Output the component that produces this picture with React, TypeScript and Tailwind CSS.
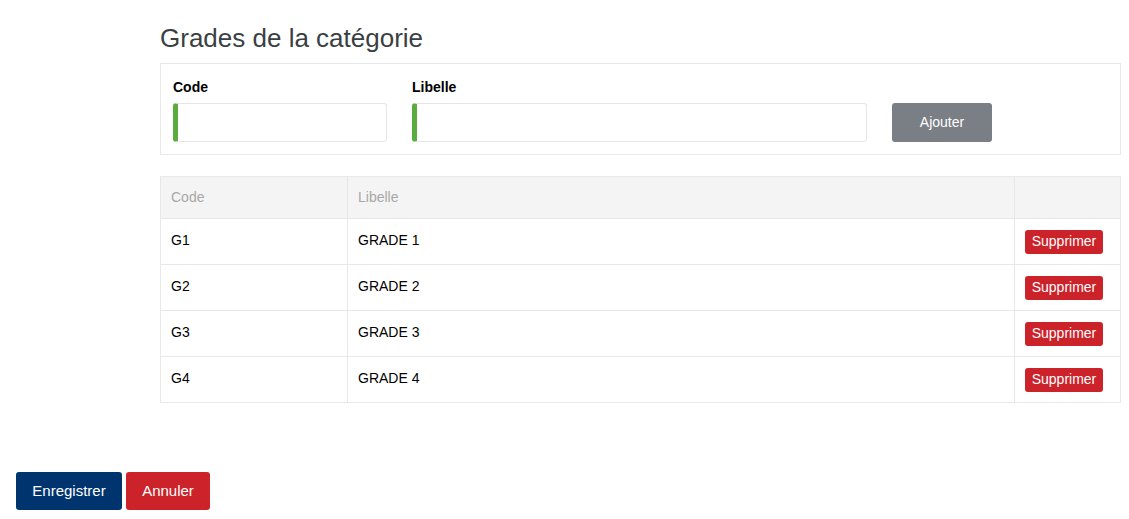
const rows = [
  { code: 'G1', libelle: 'GRADE 1' },
  { code: 'G2', libelle: 'GRADE 2' },
  { code: 'G3', libelle: 'GRADE 3' },
  { code: 'G4', libelle: 'GRADE 4' },
];

export default function App() {
  return (
    <div className="min-h-[519px] bg-white font-['Liberation_Sans',Arial,sans-serif] text-[14px] text-black">
      <div className="pl-[160px] pr-[8px] pt-[24px]">
        <h2 className="text-[26px] leading-[28px] text-[#3a3f44]">Grades de la catégorie</h2>

        {/* form */}
        <div className="mt-[11px] flex items-end border border-[#e8e8e8] px-[12px] pb-[12px] pt-[14px]">
          <div className="w-[214px]">
            <label className="block text-[14px] font-bold leading-[18px]">Code</label>
            <input className="mt-[7px] block h-[39px] w-full rounded-[3px] border border-[#e6e6e6] border-l-[5px] border-l-[#5aac3f] outline-none" />
          </div>
          <div className="ml-[25px] w-[455px]">
            <label className="block text-[14px] font-bold leading-[18px]">Libelle</label>
            <input className="mt-[7px] block h-[39px] w-full rounded-[3px] border border-[#e6e6e6] border-l-[5px] border-l-[#5aac3f] outline-none" />
          </div>
          <button className="ml-[25px] h-[39px] w-[100px] rounded-[3px] bg-[#7a7e85] text-[14px] text-white">
            Ajouter
          </button>
        </div>

        {/* table */}
        <table className="mt-[21px] w-full border-collapse">
          <thead>
            <tr className="h-[42px] bg-[#f4f4f4] text-left text-[#a8a8a8]">
              <th className="w-[187px] border border-[#e8e8e8] px-[10px] font-normal">Code</th>
              <th className="border border-[#e8e8e8] px-[10px] font-normal">Libelle</th>
              <th className="w-[106px] border border-[#e8e8e8] px-[10px] font-normal"></th>
            </tr>
          </thead>
          <tbody>
            {rows.map((r) => (
              <tr key={r.code} className="h-[46px]">
                <td className="border border-[#e8e8e8] px-[10px] pb-[2px]">{r.code}</td>
                <td className="border border-[#e8e8e8] px-[10px] pb-[2px]">{r.libelle}</td>
                <td className="border border-[#e8e8e8] px-[10px]">
                  <button className="h-[24px] w-[78px] rounded-[3px] bg-[#cc2229] text-[14px] text-white">
                    Supprimer
                  </button>
                </td>
              </tr>
            ))}
          </tbody>
        </table>
      </div>

      <div className="mt-[69px] flex gap-[4px] pl-[16px]">
        <button className="h-[38px] w-[106px] rounded-[3px] bg-[#00346f] text-[15px] text-white">
          Enregistrer
        </button>
        <button className="h-[38px] w-[84px] rounded-[3px] bg-[#cc2229] text-[15px] text-white">
          Annuler
        </button>
      </div>
    </div>
  );
}
